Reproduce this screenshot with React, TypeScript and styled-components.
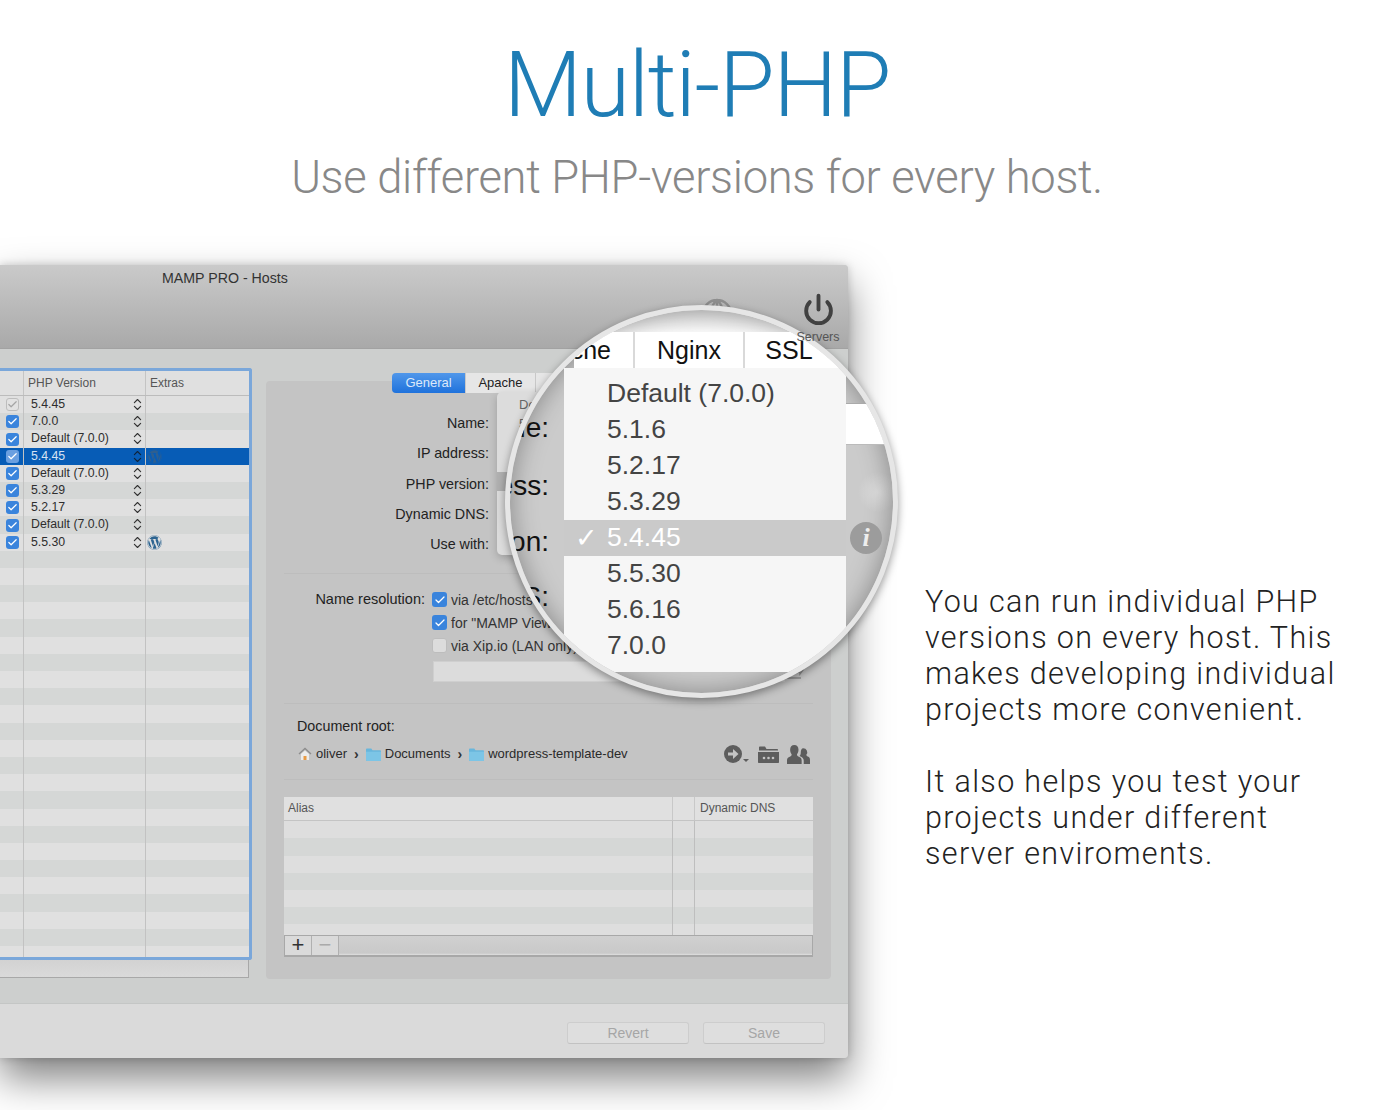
import { Check, ChevronsUpDown, Power } from 'lucide-react';
import { FaWordpress } from 'react-icons/fa';
import styled, { createGlobalStyle } from 'styled-components';

interface HostRow {
  active?: boolean;
  muted?: boolean;
  version?: string;
  selected?: boolean;
  wordpress?: boolean;
}

const hosts: HostRow[] = [
  { active: true, muted: true, version: '5.4.45' },
  { active: true, version: '7.0.0' },
  { active: true, version: 'Default (7.0.0)' },
  { active: true, version: '5.4.45', selected: true, wordpress: true },
  { active: true, version: 'Default (7.0.0)' },
  { active: true, version: '5.3.29' },
  { active: true, version: '5.2.17' },
  { active: true, version: 'Default (7.0.0)' },
  { active: true, version: '5.5.30', wordpress: true },
  ...Array.from({ length: 24 }, () => ({}))
];

const versions = ['Default (7.0.0)', '5.1.6', '5.2.17', '5.3.29', '5.4.45', '5.5.30', '5.6.16', '7.0.0'];

const App = () => {
  return (
    <Page>
      <GlobalStyle />
      <Header>
        <Title>Multi-PHP</Title>
        <Subtitle>Use different PHP-versions for every host.</Subtitle>
      </Header>
      <Stage>
        <Window>
          <TitleBar>
            <WindowTitle>MAMP PRO - Hosts</WindowTitle>
            <Toolbar>
              <GlobeIcon />
              <ServerTool>
                <Power size={33} strokeWidth={2.8} color="#414141" />
                <ToolLabel>Servers</ToolLabel>
              </ServerTool>
            </Toolbar>
          </TitleBar>
          <Body>
            <HostColumn>
              <HostTable>
                <HostHead>
                  <span />
                  <HostHeadCell>PHP Version</HostHeadCell>
                  <HostHeadCell>Extras</HostHeadCell>
                </HostHead>
                {hosts.map((host, index) => (
                  <HostLine key={index} $odd={index % 2 === 1} $selected={host.selected}>
                    <CheckCell>
                      {host.active && (
                        <CheckBox $muted={host.muted} $soft={host.selected}>
                          <Check size={11} strokeWidth={2.6} />
                        </CheckBox>
                      )}
                    </CheckCell>
                    <VersionCell>
                      {host.version}
                      {host.version && (
                        <Stepper $selected={host.selected}>
                          <ChevronsUpDown size={15} strokeWidth={1.8} />
                        </Stepper>
                      )}
                    </VersionCell>
                    <ExtrasCell $selected={host.selected}>{host.wordpress && <FaWordpress size={15} />}</ExtrasCell>
                  </HostLine>
                ))}
              </HostTable>
              <HostFooter />
            </HostColumn>
            <Pane>
              <PaneTabs>
                <PaneTab $active $width={73}>General</PaneTab>
                <PaneTab $width={69}>Apache</PaneTab>
                <PaneTab $width={61}>Nginx</PaneTab>
              </PaneTabs>
              <PopupMenu>
                {versions.map(version => (
                  <PopupItem key={version} $current={version === '5.4.45'}>{version}</PopupItem>
                ))}
              </PopupMenu>
              <FormRows>
                <FormLabel>Name:</FormLabel>
                <FormLabel>IP address:</FormLabel>
                <FormLabel>PHP version:</FormLabel>
                <FormLabel>Dynamic DNS:</FormLabel>
                <FormLabel>Use with:</FormLabel>
              </FormRows>
              <Divider $top={14} />
              <Resolution>
                <ResolutionLabel>Name resolution:</ResolutionLabel>
                <ResolutionOptions>
                  <ResolutionOption>
                    <CheckBox><Check size={12} strokeWidth={2.6} /></CheckBox>
                    via /etc/hosts
                  </ResolutionOption>
                  <ResolutionOption>
                    <CheckBox><Check size={12} strokeWidth={2.6} /></CheckBox>
                    for "MAMP Viewer"
                  </ResolutionOption>
                  <ResolutionOption>
                    <CheckBox $empty />
                    via Xip.io (LAN only)
                  </ResolutionOption>
                </ResolutionOptions>
              </Resolution>
              <AddressRow>
                <AddressField />
                <ShareIcon />
              </AddressRow>
              <Divider $top={21} />
              <RootLabel>Document root:</RootLabel>
              <PathRow>
                <Crumbs>
                  <HomeIcon />
                  <Crumb>oliver</Crumb>
                  <CrumbArrow>›</CrumbArrow>
                  <FolderIcon />
                  <Crumb>Documents</Crumb>
                  <CrumbArrow>›</CrumbArrow>
                  <FolderIcon />
                  <Crumb>wordpress-template-dev</Crumb>
                </Crumbs>
                <PathActions>
                  <RevealIcon />
                  <BrowseIcon />
                  <PeopleIcon />
                </PathActions>
              </PathRow>
              <Divider $top={16} />
              <AliasTable>
                <AliasHead>
                  <AliasHeadCell>Alias</AliasHeadCell>
                  <AliasHeadCell />
                  <AliasHeadCell>Dynamic DNS</AliasHeadCell>
                </AliasHead>
                <AliasRows>
                  {Array.from({ length: 7 }, (_, index) => (
                    <AliasLine key={index} $odd={index % 2 === 1}>
                      <AliasCell />
                      <AliasCell />
                      <span />
                    </AliasLine>
                  ))}
                </AliasRows>
                <AliasBar>
                  <BarButton>+</BarButton>
                  <BarButton $disabled>−</BarButton>
                </AliasBar>
              </AliasTable>
            </Pane>
          </Body>
          <Footer>
            <FooterButton>Revert</FooterButton>
            <FooterButton>Save</FooterButton>
          </Footer>
        </Window>
        <Copy>
          <p>You can run individual PHP versions on every host. This makes developing individual projects more convenient.</p>
          <p>It also helps you test your projects under different server enviroments.</p>
        </Copy>
        <Magnifier>
          <MagnifiedTabs>
            <MagnifiedTab $width={61} $align="flex-end">che</MagnifiedTab>
            <MagnifiedTab $width={110}>Nginx</MagnifiedTab>
            <MagnifiedTab $width={88}>SSL</MagnifiedTab>
          </MagnifiedTabs>
          <MagnifiedBody>
            <MagnifiedLabels>
              <MagnifiedLabel $height={58}>ne:</MagnifiedLabel>
              <MagnifiedLabel $height={56}>ess:</MagnifiedLabel>
              <MagnifiedLabel $height={55}>on:</MagnifiedLabel>
              <MagnifiedLabel $height={40}>S:</MagnifiedLabel>
            </MagnifiedLabels>
            <VersionMenu>
              {versions.map(version => (
                <VersionItem key={version} $current={version === '5.4.45'}>
                  {version === '5.4.45' && <VersionTick>✓</VersionTick>}
                  {version}
                </VersionItem>
              ))}
            </VersionMenu>
            <MagnifiedSide>
              <MagnifiedField />
              <InfoBadge>i</InfoBadge>
            </MagnifiedSide>
          </MagnifiedBody>
        </Magnifier>
      </Stage>
    </Page>
  );
};

const GlobeIcon = () => (
  <GlobeSvg viewBox="0 0 32 24" width="32" height="24">
    <path d="M2 20a14 14 0 0 1 28 0M16 6v16M10 20c0-6 2.500-11 6-14 3.500 3 6 8 6 14M3 15h26" fill="none" stroke="#8f8f8f" strokeWidth="2.4" />
  </GlobeSvg>
);

const ShareIcon = () => (
  <ShareSvg viewBox="0 0 18 16" width="18" height="16">
    <path d="M2 7v7h13M7 10c1-3 4-5 7-5V2l3 4-3 4V8c-3 0-5 1-7 2z" fill="none" stroke="#8c8c8c" strokeWidth="1.400" />
  </ShareSvg>
);

const HomeIcon = () => (
  <svg viewBox="0 0 14 14" width="14" height="14">
    <path d="M1 7l6-5.500L13 7" fill="none" stroke="#8d8d8d" strokeWidth="1.400" />
    <path d="M3 7l4-3.500L11 7v6H3z" fill="#ececec" />
    <path d="M5.500 9h3v4h-3z" fill="#e79a45" />
  </svg>
);

const FolderIcon = () => (
  <svg viewBox="0 0 14 12" width="15" height="13">
    <path d="M0 1.500C0 .800.500.500 1 .500h4l1 1.500h7c.600 0 1 .400 1 1V11c0 .600-.400 1-1 1H1c-.600 0-1-.400-1-1z" fill="#68b6dc" />
    <path d="M0 3.500h14V11c0 .600-.400 1-1 1H1c-.600 0-1-.400-1-1z" fill="#7cc5e6" />
  </svg>
);

const RevealIcon = () => (
  <svg viewBox="0 0 26 18" width="26" height="18">
    <circle cx="9" cy="9" r="9" fill="#5d5d5d" />
    <path d="M4 7.600h5V4l5.500 5L9 14v-3.600H4z" fill="#c4c4c4" />
    <path d="M19 14h6l-3 3z" fill="#5d5d5d" />
  </svg>
);

const BrowseIcon = () => (
  <svg viewBox="0 0 21 17" width="21" height="17">
    <path d="M1 3V1.500C1 .800 1.500.500 2 .500h5l1.500 2.500H19c.600 0 1 .400 1 1v.500H1z" fill="#5d5d5d" />
    <path d="M0 6h21v10c0 .600-.400 1-1 1H1c-.600 0-1-.400-1-1z" fill="#5d5d5d" />
    <circle cx="6" cy="12" r="1.300" fill="#c4c4c4" />
    <circle cx="10.500" cy="12" r="1.300" fill="#c4c4c4" />
    <circle cx="15" cy="12" r="1.300" fill="#c4c4c4" />
  </svg>
);

const PeopleIcon = () => (
  <svg viewBox="0 0 22 18" width="23" height="19">
    <path d="M15.500 3a3.800 3.800 0 0 1 3 6.200c0 1 1 1.500 2 2 1 .500 1.500 1.500 1.500 3V18h-6v-3c0-2-1-3-3-4l-1-.500c1-1 1.200-2.500 1.200-4 0-1.500.800-3.500 2.300-3.500z" fill="#5d5d5d" />
    <path d="M7 0c2.500 0 4 2 4 4.500 0 2-.800 3.500-1.500 4.500 0 1.200 1 1.700 2.300 2.300 1.500.700 2.200 1.700 2.200 3.200V18H0v-3.500c0-1.500.700-2.500 2.200-3.200C3.500 10.700 4.500 10.200 4.500 9 3.800 8 3 6.500 3 4.500 3 2 4.500 0 7 0z" fill="#5d5d5d" />
  </svg>
);

const GlobalStyle = createGlobalStyle`
  html, body {
    margin: 0;
    background: #fff;
  }

  body {
    font-family: "Liberation Sans", Arial, sans-serif;
  }
`;

const Page = styled.div`
  width: 1400px;
  height: 1110px;
  overflow: hidden;
  background: #fff;
`;

const Header = styled.header`
  height: 265px;
  padding: 34px 6px 0 0;
  box-sizing: border-box;
  text-align: center;
`;

const Title = styled.h1`
  margin: 0;
  font-family: Roboto, Inter, sans-serif;
  font-size: 90px;
  font-weight: 300;
  line-height: 104px;
  letter-spacing: -1.200px;
  color: #1f7db5;
`;

const Subtitle = styled.h2`
  margin: 10px 0 0;
  font-family: Roboto, Inter, sans-serif;
  font-size: 45.300px;
  font-weight: 300;
  line-height: 60px;
  letter-spacing: -0.3px;
  color: #888;
`;

const Stage = styled.main`
  position: relative;
  display: flex;
  align-items: flex-start;
`;

const Window = styled.section`
  flex: 0 0 848px;
  height: 793px;
  display: flex;
  flex-direction: column;
  overflow: hidden;
  border-radius: 0 4px 4px 0;
  background: #cdcfce;
  box-shadow: 0 20px 40px rgba(0, 0, 0, 0.5), 0 0 8px rgba(0, 0, 0, 0.18);
`;

const TitleBar = styled.div`
  flex: 0 0 84px;
  box-sizing: border-box;
  display: flex;
  justify-content: space-between;
  padding: 5px 9px 0 162px;
  border-bottom: 1px solid #a2a2a2;
  background: linear-gradient(#cacaca, #a9a9a9);
`;

const WindowTitle = styled.div`
  font-size: 14.200px;
  line-height: 17px;
  color: #333;
`;

const Toolbar = styled.div`
  display: flex;
  align-items: flex-start;
  gap: 64px;
`;

const GlobeSvg = styled.svg`
  margin-top: 24px;
`;

const ServerTool = styled.div`
  position: relative;
  z-index: 2;
  width: 42px;
  display: flex;
  flex-direction: column;
  align-items: center;
  margin-top: 23px;
`;

const ToolLabel = styled.span`
  margin-top: 4px;
  font-size: 12.500px;
  line-height: 14px;
  color: #555;
`;

const Body = styled.div`
  flex: 1;
  display: flex;
  align-items: flex-start;
  padding-top: 19px;
`;

const HostColumn = styled.div`
  flex: 0 0 252px;
`;

const HostTable = styled.div`
  height: 586px;
  overflow: hidden;
  border: 3px solid #7aa7da;
  border-left: 0;
  border-radius: 0 3px 3px 0;
`;

const HostHead = styled.div`
  height: 25px;
  box-sizing: border-box;
  display: grid;
  grid-template-columns: 23px 122px 1fr;
  border-bottom: 1px solid #bcbcbc;
  background: #e0e0e0;
`;

const HostHeadCell = styled.div`
  padding-left: 4px;
  border-left: 1px solid #c4c4c4;
  font-size: 12px;
  line-height: 24px;
  color: #555;
`;

const HostLine = styled.div<{ $odd?: boolean; $selected?: boolean }>`
  height: 17.200px;
  display: grid;
  grid-template-columns: 23px 122px 1fr;
  background: ${p => (p.$selected ? '#075cb6' : p.$odd ? '#d5d7d6' : '#e0e0e0')};
  color: ${p => (p.$selected ? '#d5e2f3' : '#2e2e2e')};
`;

const CheckCell = styled.div`
  display: flex;
  align-items: center;
  padding-left: 6px;
`;

const CheckBox = styled.span<{ $muted?: boolean; $soft?: boolean; $empty?: boolean }>`
  flex: none;
  width: 13px;
  height: 13px;
  display: inline-flex;
  align-items: center;
  justify-content: center;
  box-sizing: border-box;
  border-radius: 3px;
  border: ${p => (p.$muted || p.$empty ? '1px solid #bdbdbd' : '0')};
  background: ${p => (p.$empty ? '#dcdcdc' : p.$muted ? '#e2e2e2' : p.$soft ? '#6a9fe0' : '#3a84dc')};
  color: ${p => (p.$muted ? '#a5a5a5' : '#fff')};
`;

const VersionCell = styled.div`
  position: relative;
  padding-left: 7px;
  border-left: 1px solid #c2c2c2;
  font-size: 12.300px;
  line-height: 17.500px;
`;

const Stepper = styled.span<{ $selected?: boolean }>`
  position: absolute;
  top: 1px;
  right: 0;
  color: ${p => (p.$selected ? '#10233a' : '#333')};
`;

const ExtrasCell = styled.div<{ $selected?: boolean }>`
  display: flex;
  align-items: center;
  padding-left: 1px;
  border-left: 1px solid #c2c2c2;
  color: ${p => (p.$selected ? '#2e5f90' : '#2c6491')};
`;

const HostFooter = styled.div`
  width: 249px;
  height: 18px;
  box-sizing: border-box;
  border-right: 1px solid #a8a8a8;
  border-bottom: 1px solid #a8a8a8;
  background: linear-gradient(#d2d2d2, #dadada);
`;

const Pane = styled.div`
  position: relative;
  flex: 0 0 565px;
  height: 598px;
  box-sizing: border-box;
  margin: 13px 0 0 14px;
  padding: 0 18px;
  border-radius: 4px;
  background: #c4c4c4;
`;

const PaneTabs = styled.div`
  display: flex;
  height: 20px;
  margin: -8px 0 0 108px;
`;

const PaneTab = styled.div<{ $active?: boolean; $width: number }>`
  width: ${p => p.$width}px;
  flex: none;
  border-right: 1px solid #c8c8c8;
  border-radius: ${p => (p.$active ? '4px 0 0 4px' : '0')};
  background: ${p => (p.$active ? 'linear-gradient(#5097ea, #1f72dc)' : '#e6e6e6')};
  color: ${p => (p.$active ? '#dce9fa' : '#222')};
  font-size: 13px;
  line-height: 20px;
  text-align: center;
`;

const PopupMenu = styled.div`
  position: absolute;
  top: 11px;
  left: 231px;
  width: 240px;
  height: 163px;
  box-sizing: border-box;
  padding-top: 3px;
  border-radius: 5px;
  background: #dcdcdc;
  box-shadow: 0 3px 8px rgba(0, 0, 0, 0.2);
`;

const PopupItem = styled.div<{ $current?: boolean }>`
  height: 19.300px;
  padding-left: 22px;
  font-size: 13px;
  line-height: 19px;
  background: ${p => (p.$current ? '#b0b0b0' : 'transparent')};
  color: #666;
`;

const FormRows = styled.div`
  margin-top: 15px;
  display: grid;
  grid-template-columns: 205px;
  grid-auto-rows: 30.250px;
`;

const FormLabel = styled.label`
  font-size: 14.300px;
  line-height: 30px;
  text-align: right;
  color: #222;
`;

const Divider = styled.hr<{ $top: number }>`
  margin: ${p => p.$top}px 0 0;
  border: 0;
  border-top: 1px solid #bdbdbd;
`;

const Resolution = styled.div`
  display: flex;
  gap: 7px;
  margin-top: 14px;
`;

const ResolutionLabel = styled.span`
  width: 141px;
  font-size: 14.500px;
  line-height: 23px;
  text-align: right;
  color: #222;
  white-space: nowrap;
`;

const ResolutionOptions = styled.div`
  display: flex;
  flex-direction: column;
`;

const ResolutionOption = styled.div`
  display: flex;
  align-items: center;
  gap: 4px;
  height: 23px;
  font-size: 14px;
  line-height: 22px;
  color: #333;
  white-space: nowrap;

  ${CheckBox} {
    width: 15px;
    height: 15px;
  }
`;

const AddressRow = styled.div`
  display: flex;
  align-items: center;
  justify-content: space-between;
  margin: 4px 0 0 149px;
  padding-right: 9px;
`;

const AddressField = styled.div`
  width: 350px;
  height: 19px;
  border: 1px solid #cfcfcf;
  background: #dcdcdc;
`;

const ShareSvg = styled.svg`
  flex: none;
`;

const RootLabel = styled.div`
  margin: 14px 0 0 13px;
  font-size: 14.300px;
  line-height: 17px;
  color: #222;
`;

const PathRow = styled.div`
  display: flex;
  align-items: center;
  justify-content: space-between;
  height: 18px;
  margin: 10px 3px 0 14px;
`;

const Crumbs = styled.div`
  display: flex;
  align-items: center;
  gap: 4px;
`;

const Crumb = styled.span`
  font-size: 13px;
  line-height: 18px;
  color: #2a2a2a;
`;

const CrumbArrow = styled.span`
  margin: 0 3px;
  font-size: 14px;
  font-weight: 700;
  line-height: 16px;
  color: #333;
`;

const PathActions = styled.div`
  display: flex;
  align-items: center;
  gap: 8px;
`;

const AliasTable = styled.div`
  margin-top: 17px;
  height: 160px;
  display: flex;
  flex-direction: column;
  overflow: hidden;
  background: #dedede;
`;

const AliasHead = styled.div`
  flex: 0 0 24px;
  box-sizing: border-box;
  display: grid;
  grid-template-columns: 389px 22px 1fr;
  border-bottom: 1px solid #c4c4c4;
  background: #e0e0e0;
`;

const AliasHeadCell = styled.div`
  padding-left: 4px;
  border-right: 1px solid #c8c8c8;
  font-size: 12px;
  line-height: 23px;
  color: #555;

  &:last-child {
    padding-left: 5px;
    border-right: 0;
  }
`;

const AliasRows = styled.div`
  flex: 1;
  overflow: hidden;
`;

const AliasLine = styled.div<{ $odd?: boolean }>`
  height: 17.200px;
  display: grid;
  grid-template-columns: 389px 22px 1fr;
  background: ${p => (p.$odd ? '#d5d7d6' : '#dedede')};
`;

const AliasCell = styled.span`
  border-right: 1px solid #bebebe;
`;

const AliasBar = styled.div`
  flex: 0 0 22px;
  box-sizing: border-box;
  display: flex;
  border: 1px solid #a8a8a8;
  border-bottom-width: 2px;
  background: linear-gradient(#d0d0d0, #c9c9c9 90%, #e0e0e0);
`;

const BarButton = styled.div<{ $disabled?: boolean }>`
  width: 26px;
  border-right: 1px solid #b0b0b0;
  background: #dadada;
  font-size: 22px;
  font-weight: 400;
  line-height: 18px;
  text-align: center;
  color: ${p => (p.$disabled ? '#aaa' : '#333')};
`;

const Footer = styled.footer`
  flex: 0 0 55px;
  box-sizing: border-box;
  display: flex;
  align-items: center;
  justify-content: flex-end;
  gap: 14px;
  padding: 3px 23px 0 0;
  border-top: 1px solid #c4c6c5;
  background: #dadada;
`;

const FooterButton = styled.div`
  width: 122px;
  height: 22px;
  box-sizing: border-box;
  border: 1px solid #cdcdcd;
  border-bottom-color: #c2c2c2;
  border-radius: 3px;
  background: #dedede;
  font-size: 14px;
  line-height: 20px;
  text-align: center;
  color: #a6a6a6;
`;

const Copy = styled.aside`
  margin: 319px 0 0 77px;
  font-family: Roboto, "Open Sans", sans-serif;
  font-size: 30.500px;
  font-weight: 300;
  line-height: 36px;
  letter-spacing: 1.350px;
  color: #222;

  p {
    width: 430px;
    margin: 0 0 36px;
  }
`;

const Magnifier = styled.div`
  position: absolute;
  z-index: 1;
  top: 40px;
  left: 505px;
  width: 393px;
  height: 393px;
  box-sizing: border-box;
  overflow: hidden;
  padding-top: 22px;
  border: 5px solid #e6e6e6;
  border-radius: 50%;
  background:
    linear-gradient(rgba(255, 255, 255, 0.35), rgba(255, 255, 255, 0.9) 22px, transparent 22px),
    radial-gradient(circle at 368px 182px, #dcdcdc, transparent 20px),
    #cbcbcb;
  box-shadow: 0 3px 9px rgba(0, 0, 0, 0.4), inset 0 0 26px rgba(0, 0, 0, 0.35);
`;

const MagnifiedTabs = styled.div`
  display: flex;
  height: 36px;
  margin-left: 64px;
  background: #fff;
`;

const MagnifiedTab = styled.div<{ $width: number; $align?: string }>`
  flex: none;
  width: ${p => p.$width}px;
  box-sizing: border-box;
  display: flex;
  justify-content: ${p => p.$align || 'center'};
  padding-right: ${p => (p.$align ? '22px' : '0')};
  border-right: 2px solid #d9d9d9;
  overflow: hidden;
  font-size: 25px;
  line-height: 36px;
  color: #111;

  &:last-child {
    border-right: 0;
  }
`;

const MagnifiedBody = styled.div`
  display: flex;
  align-items: flex-start;
`;

const MagnifiedLabels = styled.div`
  flex: 0 0 54px;
  min-width: 0;
  padding-right: 15px;
  box-sizing: border-box;
  margin-top: 46px;
  display: flex;
  flex-direction: column;
  align-items: flex-end;
`;

const MagnifiedLabel = styled.div<{ $height: number }>`
  height: ${p => p.$height}px;
  font-size: 28px;
  line-height: 28px;
  color: #111;
  white-space: nowrap;
`;

const VersionMenu = styled.div`
  flex: 0 0 282px;
  box-sizing: border-box;
  padding: 8px 0;
  border-radius: 0 0 3px 3px;
  background: #f6f6f6;
`;

const VersionItem = styled.div<{ $current?: boolean }>`
  position: relative;
  height: 36px;
  padding-left: 43px;
  font-size: 26.500px;
  line-height: 35px;
  background: ${p => (p.$current ? '#cacaca' : 'transparent')};
  color: ${p => (p.$current ? '#fff' : '#444')};
`;

const VersionTick = styled.span`
  position: absolute;
  left: 11px;
  font-family: "DejaVu Sans", sans-serif;
  font-size: 27px;
  font-weight: 700;
  color: #fff;
`;

const MagnifiedSide = styled.div`
  flex: 1;
  display: flex;
  flex-direction: column;
`;

const MagnifiedField = styled.div`
  height: 40px;
  margin-top: 35px;
  border-top: 1px solid #aaa;
  border-bottom: 1px solid #bbb;
  background: #fff;
`;

const InfoBadge = styled.div`
  width: 32px;
  height: 32px;
  margin: 77px 0 0 4px;
  border-radius: 50%;
  background: #9c9c9c;
  font-family: "Liberation Serif", serif;
  font-size: 26px;
  font-style: italic;
  font-weight: 700;
  line-height: 32px;
  text-align: center;
  color: #eee;
`;

export default App;
